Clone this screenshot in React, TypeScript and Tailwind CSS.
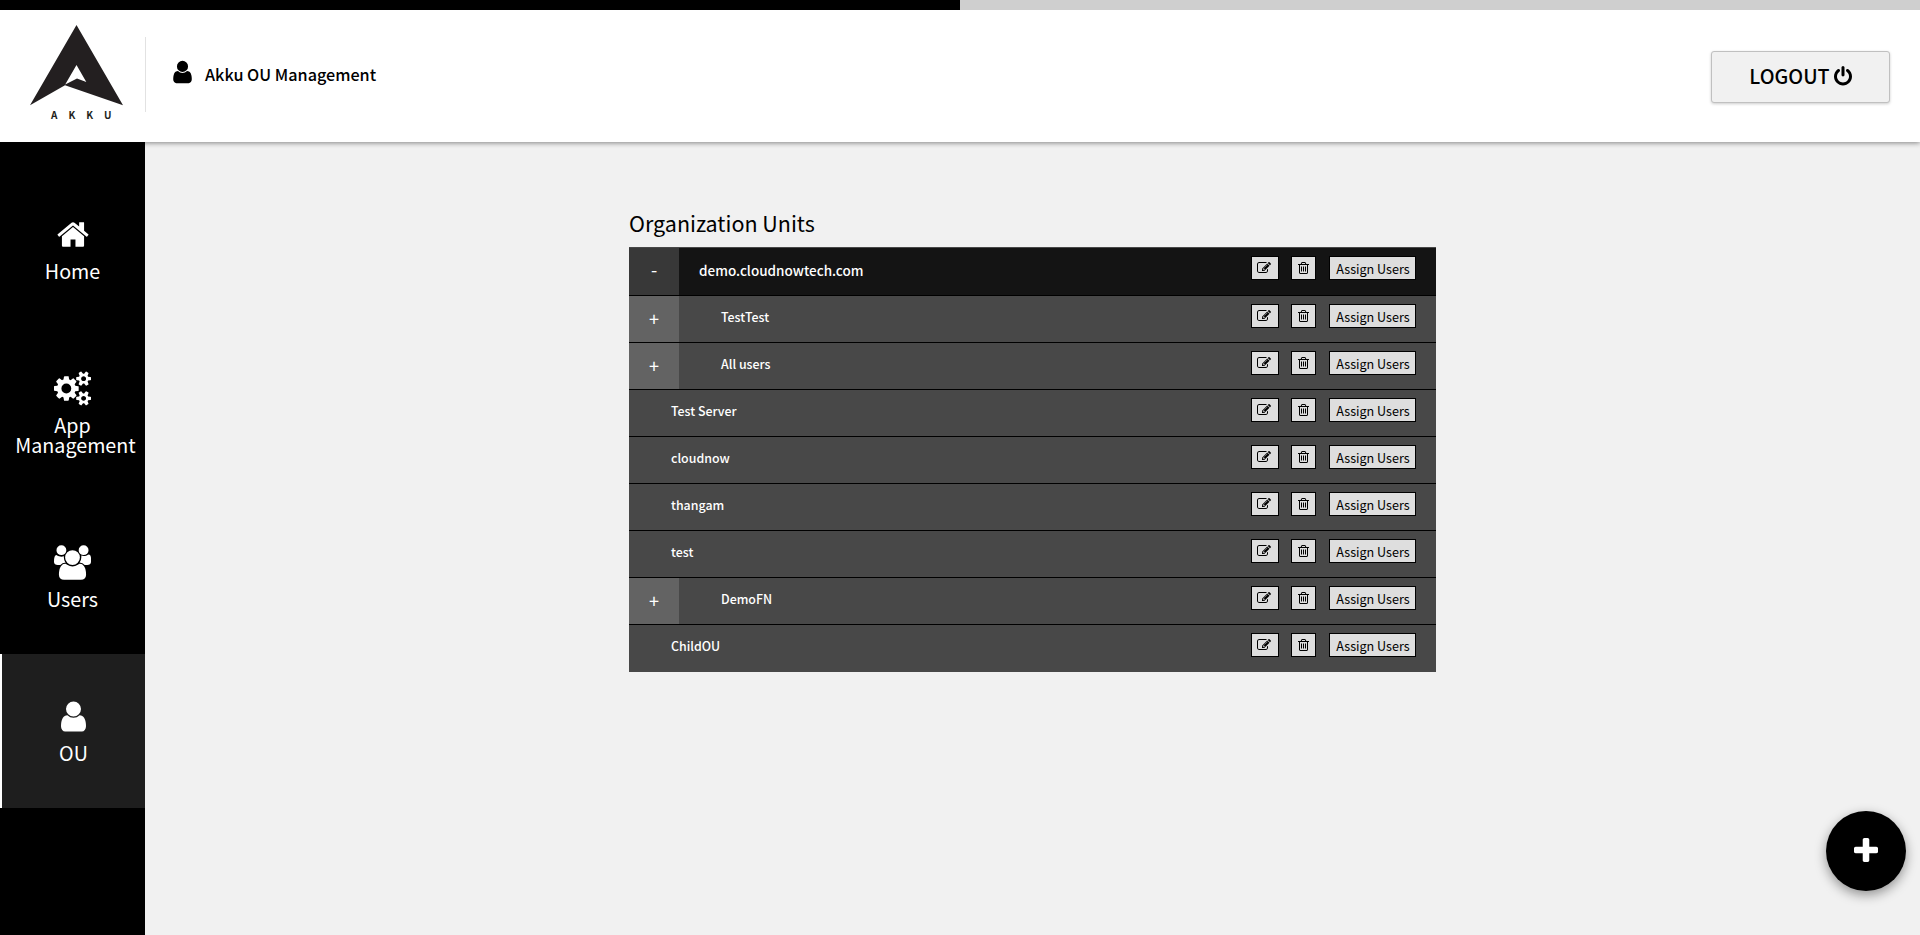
import type { ReactNode } from "react";

type IconProps = { className: string };

const USER_PATH =
  "M1536 1399q0 109-62.5 187t-150.5 78h-854q-88 0-150.5-78t-62.5-187q0-85 8.5-160.5t31.5-152 58.5-131 94-89 134.5-34.5q131 128 313 128t313-128q76 0 134.5 34.5t94 89 58.5 131 31.5 152 8.5 160.5zm-256-887q0 159-112.5 271.5t-271.5 112.5-271.5-112.5-112.5-271.5 112.5-271.5 271.5-112.5 271.5 112.5 112.5 271.5z";

function Glyph({ box, d, className }: { box: string; d: string; className: string }) {
  return (
    <svg viewBox={box} className={className} fill="currentColor" aria-hidden="true">
      <path d={d} />
    </svg>
  );
}

const UserIcon = ({ className }: IconProps) => <Glyph box="256 0 1280 1792" className={className} d={USER_PATH} />;

const HomeIcon = ({ className }: IconProps) => (
  <Glyph
    box="64 0 1664 1792"
    className={className}
    d="M1472 992v480q0 26-19 45t-45 19h-384v-384h-256v384h-384q-26 0-45-19t-19-45v-480q0-1 .5-3t.5-3l575-474 575 474q1 2 1 6zm223-69l-62 74q-8 9-21 11h-3q-13 0-21-7l-692-577-692 577q-12 8-24 7-13-2-21-11l-62-74q-8-10-7-23.5t11-21.5l719-599q32-26 76-26t76 26l244 204v-195q0-14 9-23t23-9h192q14 0 23 9t9 23v408l219 182q10 8 11 21.5t-7 23.5z"
  />
);

const CogsIcon = ({ className }: IconProps) => (
  <Glyph
    box="-64 0 1920 1792"
    className={className}
    d="M832 896q0-106-75-181t-181-75-181 75-75 181 75 181 181 75 181-75 75-181zm768 512q0-52-38-90t-90-38-90 38-38 90q0 53 37.5 90.5t90.5 37.5 90.5-37.5 37.5-90.5zm0-1024q0-52-38-90t-90-38-90 38-38 90q0 53 37.5 90.5t90.5 37.5 90.5-37.5 37.5-90.5zm-384 421v185q0 10-7 19.5t-16 10.5l-155 24q-11 35-32 76 34 48 90 115 7 11 7 20 0 12-7 19-23 30-82.5 89.5t-78.5 59.5q-11 0-21-7l-115-90q-37 19-77 31-11 108-23 155-7 24-30 24h-186q-11 0-20-7.5t-10-17.5l-23-153q-34-10-75-31l-118 89q-7 7-20 7-11 0-21-8-144-133-144-160 0-9 7-19 10-14 41-53t47-61q-23-44-35-82l-152-24q-10-1-17-9.5t-7-19.5v-185q0-10 7-19.5t16-10.5l155-24q11-35 32-76-34-48-90-115-7-11-7-20 0-12 7-20 22-30 82-89t79-59q11 0 21 7l115 90q34-18 77-32 11-108 23-154 7-24 30-24h186q11 0 20 7.5t10 17.5l23 153q34 10 75 31l118-89q8-7 20-7 11 0 21 8 144 133 144 160 0 8-7 19-12 16-42 54t-45 60q23 48 34 82l152 23q10 2 17 10.5t7 19.5zm640 533v140q0 16-149 31-12 27-30 52 51 113 51 138 0 4-4 7-122 71-124 71-8 0-46-47t-52-68q-20 2-30 2t-30-2q-14 21-52 68t-46 47q-2 0-124-71-4-3-4-7 0-25 51-138-18-25-30-52-149-15-149-31v-140q0-16 149-31 13-29 30-52-51-113-51-138 0-4 4-7 4-2 35-20t59-34 30-16q8 0 46 46.5t52 67.5q20-2 30-2t30 2q51-71 92-112l6-2q4 0 124 70 4 3 4 7 0 25-51 138 17 23 30 52 149 15 149 31zm0-1024v140q0 16-149 31-12 27-30 52 51 113 51 138 0 4-4 7-122 71-124 71-8 0-46-47t-52-68q-20 2-30 2t-30-2q-14 21-52 68t-46 47q-2 0-124-71-4-3-4-7 0-25 51-138-18-25-30-52-149-15-149-31v-140q0-16 149-31 13-29 30-52-51-113-51-138 0-4 4-7 4-2 35-20t59-34 30-16q8 0 46 46.5t52 67.5q20-2 30-2t30 2q51-71 92-112l6-2q4 0 124 70 4 3 4 7 0 25-51 138 17 23 30 52 149 15 149 31z"
  />
);

const GroupIcon = ({ className }: IconProps) => (
  <Glyph
    box="-64 0 1920 1792"
    className={className}
    d="M529 896q-162 5-265 128h-134q-82 0-138-40.5t-56-118.5q0-353 124-353 6 0 43.5 21t97.5 42.5 119 21.5q67 0 133-23-5 37-5 66 0 159 93 291zm1071 637q0 120-73 189.5t-194 69.5h-874q-121 0-194-69.5t-73-189.5q0-53 3.5-103.5t14-109 26.5-108.5 43-97.5 62-81 85.5-53.5 111.5-20q10 0 43 21.5t73 48 107 48 135 21.5 135-21.5 107-48 73-48 43-21.5q61 0 111.5 20t85.5 53.5 62 81 43 97.5 26.5 108.5 14 109 3.5 103.5zm-1024-1277q0 106-75 181t-181 75-181-75-75-181 75-181 181-75 181 75 75 181zm704 384q0 159-112.5 271.5t-271.5 112.5-271.5-112.5-112.5-271.5 112.5-271.5 271.5-112.5 271.5 112.5 112.5 271.5zm576 225q0 78-56 118.5t-138 40.5h-134q-103-123-265-128 93-132 93-291 0-29-5-66 66 23 133 23 59 0 119-21.5t97.5-42.5 43.5-21q124 0 124 353zm-128-609q0 106-75 181t-181 75-181-75-75-181 75-181 181-75 181 75 75 181z"
  />
);

const PowerIcon = ({ className }: IconProps) => (
  <Glyph
    box="128 0 1536 1792"
    className={className}
    d="M1664 896q0 156-61 298t-164 245-245 164-298 61-298-61-245-164-164-245-61-298q0-182 80.5-343t226.5-270q43-32 95.5-25t83.5 50q32 42 24.5 94.5t-49.5 84.5q-98 74-151.5 181t-53.5 228q0 104 40.5 198.5t109.5 163.5 163.5 109.5 198.5 40.5 198.5-40.5 163.5-109.5 109.5-163.5 40.5-198.5q0-121-53.5-228t-151.5-181q-42-32-49.5-84.5t24.5-94.5q31-43 84-50t95 25q146 109 226.5 270t80.5 343zm-640-768v640q0 52-38 90t-90 38-90-38-38-90v-640q0-52 38-90t90-38 90 38 38 90z"
  />
);

const EditIcon = ({ className }: IconProps) => (
  <Glyph
    box="0 0 1792 1792"
    className={className}
    d="M888 1184l116-116-152-152-116 116v56h96v96h56zm440-720q-16-16-33 1l-350 350q-17 17-1 33t33-1l350-350q17-17 1-33zm80 594v190q0 119-84.5 203.5t-203.5 84.5h-832q-119 0-203.5-84.5t-84.5-203.5v-832q0-119 84.5-203.5t203.5-84.5h832q63 0 117 25 15 7 18 23 3 17-9 29l-49 49q-14 14-32 8-23-6-45-6h-832q-66 0-113 47t-47 113v832q0 66 47 113t113 47h832q66 0 113-47t47-113v-126q0-13 9-22l64-64q15-15 35-7t20 29zm-96-738l288 288-672 672h-288v-288zm444 132l-92 92-288-288 92-92q28-28 68-28t68 28l152 152q28 28 28 68t-28 68z"
  />
);

const TrashIcon = ({ className }: IconProps) => (
  <Glyph
    box="192 0 1408 1792"
    className={className}
    d="M704 736v576q0 14-9 23t-23 9h-64q-14 0-23-9t-9-23v-576q0-14 9-23t23-9h64q14 0 23 9t9 23zm256 0v576q0 14-9 23t-23 9h-64q-14 0-23-9t-9-23v-576q0-14 9-23t23-9h64q14 0 23 9t9 23zm256 0v576q0 14-9 23t-23 9h-64q-14 0-23-9t-9-23v-576q0-14 9-23t23-9h64q14 0 23 9t9 23zm128 724v-948h-896v948q0 22 7 40.5t14.5 27 10.5 8.5h832q3 0 10.5-8.5t14.5-27 7-40.5zm-672-1076h448l-48-117q-7-9-17-11h-317q-10 2-17 11zm928 32v64q0 14-9 23t-23 9h-96v948q0 83-47 143.5t-113 60.5h-832q-66 0-113-58.5t-47-141.5v-952h-96q-14 0-23-9t-9-23v-64q0-14 9-23t23-9h309l70-167q15-37 54-63t79-26h320q40 0 79 26t54 63l70 167h309q14 0 23 9t9 23z"
  />
);

const PlusIcon = ({ className }: IconProps) => (
  <Glyph
    box="192 128 1408 1408"
    className={className}
    d="M1600 736v192q0 40-28 68t-68 28h-416v416q0 40-28 68t-68 28h-192q-40 0-68-28t-28-68v-416h-416q-40 0-68-28t-28-68v-192q0-40 28-68t68-28h416v-416q0-40 28-68t68-28h192q40 0 68 28t28 68v416h416q40 0 68 28t28 68z"
  />
);

function Logo() {
  return (
    <div className="flex w-[145px] shrink-0 flex-col pt-[15px] pl-[30px]">
      <svg viewBox="0 0 93 81" className="h-[81px] w-[93px]" aria-hidden="true">
        <path fill="#231f20" fillRule="evenodd" d="M46.5 0L93 80.2 35 60.2 0 80.2zM46.5 40L35.2 59.6 47 53.6 56.3 57z" />
      </svg>
      <span className="mt-[1px] pl-[21px] text-[10px] leading-[16px] font-bold tracking-[11px] text-[#231f20]">AKKU</span>
    </div>
  );
}

function NavItem({ icon, label, active = false }: { icon: ReactNode; label: ReactNode; active?: boolean }) {
  return (
    <a
      className={
        active
          ? "flex flex-col items-center border-l-2 border-white bg-[#1e1e1e] pt-[44.5px] pb-[45px] text-white"
          : "flex flex-col items-center pt-[44.5px] pb-[45px] text-white"
      }
    >
      {icon}
      <span className="mt-[9.5px] text-center text-[19.7px] leading-[20px]">{label}</span>
    </a>
  );
}

type Unit = { name: string; toggle?: "+" | "-" };

const CHILDREN: Unit[] = [
  { name: "TestTest", toggle: "+" },
  { name: "All users", toggle: "+" },
  { name: "Test Server" },
  { name: "cloudnow" },
  { name: "thangam" },
  { name: "test" },
  { name: "DemoFN", toggle: "+" },
  { name: "ChildOU" },
];

function Actions() {
  return (
    <div className="mt-2 mr-5 ml-auto flex h-6 text-black">
      <button className="flex w-7 justify-center border border-black bg-[#dedede] pt-[4px]">
        <EditIcon className="mr-[2px] h-[14px] w-[14px]" />
      </button>
      <button className="ml-3 flex w-[25px] justify-center border border-black bg-[#dedede] pt-[4px]">
        <TrashIcon className="h-[14px] w-[11px]" />
      </button>
      <button className="ml-[13px] w-[87px] border border-black bg-[#dedede] pl-[1px] text-[12.6px] leading-[23px]">Assign Users</button>
    </div>
  );
}

function UnitRow({ unit }: { unit: Unit }) {
  return (
    <li className="flex h-[47px] border-b border-black bg-[#484848] last:border-[#484848]">
      {unit.toggle && <button className="w-[50px] bg-[#636363] pb-[2px] text-[18px] leading-[44px] text-white">{unit.toggle}</button>}
      <span className="pl-[42px] text-[12.4px] leading-[42px] font-medium text-white">{unit.name}</span>
      <Actions />
    </li>
  );
}

export default function App() {
  return (
    <div className="relative flex h-[935px] w-full flex-col overflow-hidden bg-[#f1f1f1] font-['Noto_Sans_CJK_SC','Noto_Sans',sans-serif] text-black">
      <div className="relative z-20 h-[10px] shrink-0 bg-[#cfcfcf]">
        <div className="h-full w-1/2 bg-black" />
      </div>
      <header className="z-10 flex h-[132px] shrink-0 bg-white shadow-[0_1px_5px_rgba(0,0,0,0.45)]">
        <Logo />
        <div className="mt-[27px] flex h-[75px] border-l border-[#e2e2e2] pl-[27px]">
          <UserIcon className="mt-[22px] h-[26px] w-[19px]" />
          <h1 className="ml-[13px] text-[16.2px] leading-[74px] font-medium">Akku OU Management</h1>
        </div>
        <button className="mt-[41px] mr-[30px] ml-auto flex h-[52px] w-[179px] items-center justify-center rounded-[3px] border border-[#c0c0c0] bg-[#f1f1f1] text-[19.7px] font-medium shadow-[0_1px_3px_rgba(0,0,0,0.2)]">
          <span className="pb-[2px] leading-[48px]">LOGOUT</span>
          <PowerIcon className="mb-[1px] ml-[4px] h-[21px] w-[18px]" />
        </button>
      </header>
      <div className="flex grow">
        <nav className="w-[145px] shrink-0 bg-black pt-[30px]">
          <NavItem icon={<HomeIcon className="h-[35px] w-[32px]" />} label="Home" />
          <NavItem
            icon={<CogsIcon className="h-[35px] w-[37px]" />}
            label={
              <>
                App
                <br />
                <span className="ml-[6px]">Management</span>
              </>
            }
          />
          <NavItem icon={<GroupIcon className="h-[35px] w-[37px]" />} label="Users" />
          <NavItem active icon={<UserIcon className="h-[35px] w-[25px]" />} label="OU" />
        </nav>
        <main className="grow pt-[65px] pl-[484px]">
          <h2 className="text-[21.5px] leading-[32px]">Organization Units</h2>
          <ul className="mt-2 w-[807px]">
            <li className="flex h-[49px] border-t border-b border-t-[#484848] border-b-black bg-[#141414]">
              <button className="w-[50px] bg-[#383838] pb-[4px] text-[18px] leading-[43px] text-white">-</button>
              <span className="pl-5 text-[13.5px] leading-[44px] font-medium text-white">demo.cloudnowtech.com</span>
              <Actions />
            </li>
            {CHILDREN.map((unit) => (
              <UnitRow key={unit.name} unit={unit} />
            ))}
          </ul>
        </main>
      </div>
      <button className="absolute top-[811px] right-[14px] flex h-20 w-20 items-center justify-center rounded-full bg-black text-white shadow-[0_4px_12px_rgba(0,0,0,0.4)]">
        <PlusIcon className="mb-[2px] h-[24px] w-[24px]" />
      </button>
    </div>
  );
}
